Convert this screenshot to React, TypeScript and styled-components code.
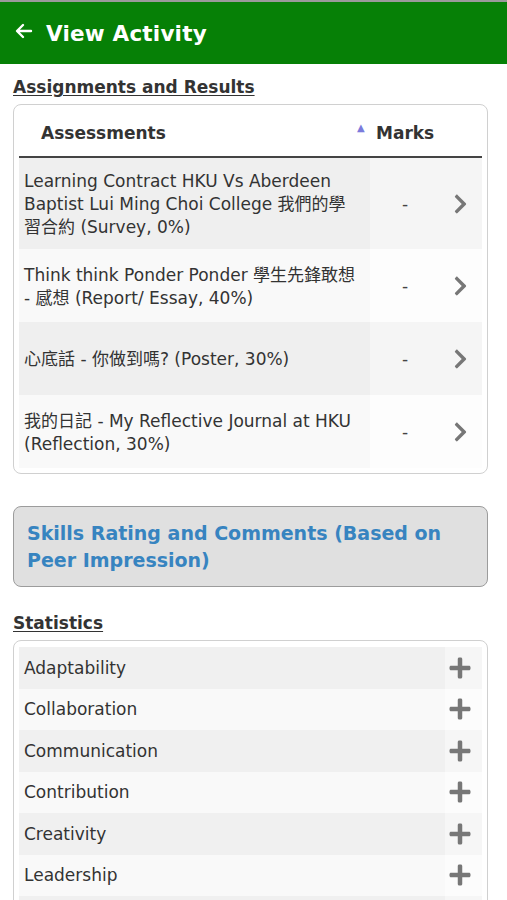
import React from "react";
import styled, { createGlobalStyle } from "styled-components";
import { FaChevronRight, FaPlus } from "react-icons/fa";

const GlobalStyle = createGlobalStyle`
  html, body {
    margin: 0;
    padding: 0;
    background: #ffffff;
  }
  body {
    font-family: "DejaVu Sans", Verdana, "Noto Sans CJK TC", sans-serif;
    color: #333;
  }
`;

type Assessment = { title: string; marks: string };

const assessments: Assessment[] = [
  {
    title:
      "Learning Contract HKU Vs Aberdeen Baptist Lui Ming Choi College 我們的學習合約 (Survey, 0%)",
    marks: "-",
  },
  { title: "Think think Ponder Ponder 學生先鋒敢想 - 感想 (Report/ Essay, 40%)", marks: "-" },
  { title: "心底話 - 你做到嗎? (Poster, 30%)", marks: "-" },
  { title: "我的日記 - My Reflective Journal at HKU (Reflection, 30%)", marks: "-" },
];

const skills = [
  "Adaptability",
  "Collaboration",
  "Communication",
  "Contribution",
  "Creativity",
  "Leadership",
  "Problem Solving",
];

const App = () => {
  return (
    <>
      <GlobalStyle />
      <Page>
        <Header>
          <BackArrow viewBox="0 0 20 20">
            <path d="M17 10H3.5M9 4L3 10l6 6" />
          </BackArrow>
          <HeaderTitle>View Activity</HeaderTitle>
        </Header>
        <Content>
          <SectionTitle>Assignments and Results</SectionTitle>
          <Card>
            <Table>
              <HeadRow>
                <HeadCell>Assessments</HeadCell>
                <SortCell>▲</SortCell>
                <HeadCell>Marks</HeadCell>
                <HeadCell />
              </HeadRow>
              {assessments.map((a, i) => (
                <Row key={i}>
                  <TitleCell $odd={i % 2 === 0}>{a.title}</TitleCell>
                  <MarkCell $odd={i % 2 === 0}>{a.marks}</MarkCell>
                  <ArrowCell $odd={i % 2 === 0}>
                    <Chevron />
                  </ArrowCell>
                </Row>
              ))}
            </Table>
          </Card>
          <SkillsButton>Skills Rating and Comments (Based on Peer Impression)</SkillsButton>
          <SectionTitle>Statistics</SectionTitle>
          <Card>
            <StatList>
              {skills.map((s, i) => (
                <StatRow key={s}>
                  <StatName $odd={i % 2 === 0}>{s}</StatName>
                  <PlusCell $odd={i % 2 === 0}>
                    <PlusIcon />
                  </PlusCell>
                </StatRow>
              ))}
            </StatList>
          </Card>
        </Content>
      </Page>
    </>
  );
};
export default App;

const Page = styled.div`
  width: 507px;
  height: 900px;
  overflow: hidden;
`;

const Header = styled.header`
  height: 62px;
  background: #068006;
  border-top: 2px solid #9a9a9a;
  display: flex;
  align-items: center;
  gap: 12px;
  padding-left: 14px;
`;

const BackArrow = styled.svg`
  width: 20px;
  height: 20px;
  fill: none;
  stroke: #fff;
  stroke-width: 2.4;
  stroke-linecap: round;
  stroke-linejoin: round;
  margin-top: -4px;
`;

const HeaderTitle = styled.h1`
  margin: 0;
  color: #fff;
  font-size: 21.5px;
  font-weight: bold;
  letter-spacing: 0.2px;
`;

const Content = styled.main`
  padding: 12px 19px 0 13px;
  display: flex;
  flex-direction: column;
`;

const SectionTitle = styled.h2`
  margin: 0 0 6px;
  font-size: 17px;
  font-weight: bold;
  color: #333;
  text-decoration: underline;
  text-underline-offset: 2px;
  line-height: 22px;
`;

const Card = styled.div`
  border: 1px solid #d0d0d0;
  border-radius: 8px;
  padding: 6px 5px 5px;
  background: #fff;
  margin-bottom: 32px;
`;

const Table = styled.div`
  display: grid;
  grid-template-columns: 339px 12px 70px 42px;
`;

const HeadRow = styled.div`
  display: contents;
`;

const HeadCell = styled.div`
  font-weight: bold;
  font-size: 17px;
  line-height: 20px;
  color: #333;
  padding: 12px 0 13px 6px;
  border-bottom: 2px solid #444;
  &:first-child {
    padding-left: 22px;
  }
`;

const SortCell = styled.div`
  color: #7b7bdc;
  font-size: 10px;
  padding-top: 11px;
  border-bottom: 2px solid #444;
  margin-left: -1px;
`;

const Row = styled.div`
  display: contents;
`;

const TitleCell = styled.div<{ $odd: boolean }>`
  grid-column: 1 / 3;
  background: ${(p) => (p.$odd ? "#efefef" : "#f9f9f9")};
  padding: 12px 12px 10px 5px;
  font-size: 17px;
  line-height: 23px;
  color: #333;
  min-height: 51px;
  display: flex;
  align-items: center;
`;

const MarkCell = styled.div<{ $odd: boolean }>`
  background: ${(p) => (p.$odd ? "#f5f5f5" : "#fdfdfd")};
  display: flex;
  align-items: center;
  padding-left: 32px;
  font-size: 17px;
  color: #444;
`;

const ArrowCell = styled.div<{ $odd: boolean }>`
  background: ${(p) => (p.$odd ? "#f5f5f5" : "#fdfdfd")};
  display: flex;
  align-items: center;
  padding-left: 11px;
`;

const Chevron = styled(FaChevronRight)`
  color: #777;
  width: 19px;
  height: 22px;
`;

const SkillsButton = styled.div`
  background: #e0e0e0;
  border: 1px solid #9c9c9c;
  border-radius: 8px;
  padding: 13px 20px 12px 13px;
  color: #3784c0;
  font-weight: bold;
  font-size: 19px;
  line-height: 27px;
  margin-bottom: 25px;
`;

const StatList = styled.div`
  display: flex;
  flex-direction: column;
`;

const StatRow = styled.div`
  display: grid;
  grid-template-columns: 1fr 37px;
  height: 41.5px;
  flex-shrink: 0;
`;

const StatName = styled.div<{ $odd: boolean }>`
  background: ${(p) => (p.$odd ? "#f0f0f0" : "#f9f9f9")};
  display: flex;
  align-items: center;
  padding-left: 5px;
  font-size: 17px;
  color: #333;
`;

const PlusCell = styled.div<{ $odd: boolean }>`
  background: ${(p) => (p.$odd ? "#f6f6f6" : "#fcfcfc")};
  display: flex;
  align-items: center;
  padding-left: 3px;
`;

const PlusIcon = styled(FaPlus)`
  color: #777;
  width: 24px;
  height: 24px;
`;
